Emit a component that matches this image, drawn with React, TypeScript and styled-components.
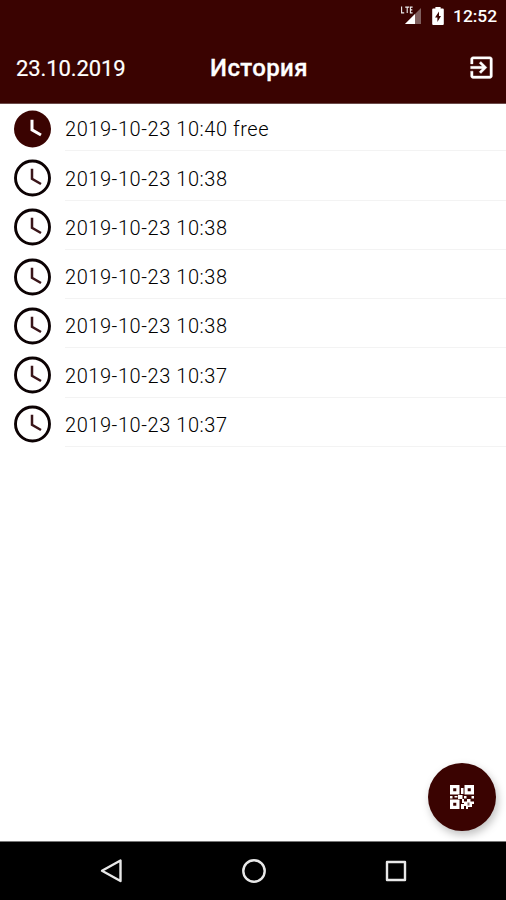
import React from 'react';
import styled, { createGlobalStyle } from 'styled-components';

const Global = createGlobalStyle`
  * { box-sizing: border-box; }
  body { margin: 0; background: #fff; font-family: Roboto, "Noto Sans", sans-serif; }
`;

const Screen = styled.div`
  position: relative;
  display: flex;
  flex-direction: column;
  width: 506px;
  height: 900px;
  overflow: hidden;
  background: #fff;
`;

const Top = styled.header`
  flex: none;
  height: 104px;
  background: #3a0301;
  border-bottom: 1px solid #6b4a49;
  color: #fff;
`;

const StatusBar = styled.div`
  display: flex;
  align-items: center;
  justify-content: flex-end;
  height: 32px;
  padding-right: 9px;
  svg { display: block; }
`;

const Battery = styled.svg`
  margin: 0 9px 0 10px;
`;

const Clock = styled.span`
  width: 44px;
  font-size: 17.4px;
  line-height: 32px;
  font-weight: 500;
  white-space: nowrap;
`;

const AppBar = styled.div`
  display: grid;
  grid-template-columns: 1fr auto 1fr;
  align-items: center;
  height: 71px;
  padding: 0 10px 0 16px;
`;

const DateLabel = styled.span`
  padding-top: 1px;
  font-size: 22px;
  letter-spacing: -0.1px;
  -webkit-text-stroke: 0.2px #fff;
`;

const Title = styled.h1`
  margin: 0;
  padding: 1px 0 0 6px;
  font-size: 24px;
  font-weight: 500;
  letter-spacing: 0.4px;
  -webkit-text-stroke: 0.3px #fff;
`;

const ExitButton = styled.button`
  justify-self: end;
  padding: 0;
  border: 0;
  background: none;
  color: #fff;
  svg { display: block; }
`;

const List = styled.ul`
  flex: 1;
  margin: 0;
  padding: 0;
  list-style: none;
`;

const Row = styled.li`
  display: flex;
  align-items: center;
  height: 49.25px;
  padding-left: 10px;
  &:first-child { height: 47.4px; }
`;

const RowIcon = styled.svg<{ $active?: boolean }>`
  flex: none;
  display: block;
  margin-top: ${(p) => (p.$active ? 2.6 : 4)}px;
`;

const RowText = styled.span<{ $active?: boolean }>`
  flex: 1;
  align-self: stretch;
  display: flex;
  align-items: center;
  margin-left: 11px;
  padding-top: ${(p) => (p.$active ? 4.5 : 6)}px;
  border-bottom: 1px solid #f3f3f3;
  font-size: 20px;
  font-weight: 300;
  letter-spacing: 0.56px;
  color: #000;
`;

const Fab = styled.button`
  position: absolute;
  right: 10px;
  bottom: 69px;
  display: grid;
  place-items: center;
  width: 68px;
  height: 68px;
  padding: 0;
  border: 0;
  border-radius: 50%;
  background: #3a0301;
  box-shadow: 2px 4px 9px rgba(0, 0, 0, 0.25);
`;

const NavBar = styled.nav`
  flex: none;
  display: flex;
  justify-content: center;
  height: 59px;
  padding-left: 2px;
  border-top: 1px solid #777;
  background: #000;
`;

const NavButton = styled.button`
  display: grid;
  place-items: center;
  width: 142px;
  padding: 0;
  border: 0;
  background: none;
`;

const entries = [
  { text: '2019-10-23 10:40 free', active: true },
  { text: '2019-10-23 10:38' },
  { text: '2019-10-23 10:38' },
  { text: '2019-10-23 10:38' },
  { text: '2019-10-23 10:38' },
  { text: '2019-10-23 10:37' },
  { text: '2019-10-23 10:37' },
];

const ClockIcon = ({ active }: { active?: boolean }) => (
  <RowIcon $active={active} width="44" height="44" viewBox="0 0 44 44" fill="none">
    {active ? (
      <circle cx="22.5" cy="22" r="18.5" fill="#3a0301" />
    ) : (
      <circle cx="22.5" cy="22" r="17" stroke="#0c0203" strokeWidth="2.9" />
    )}
    <path d="M22 12.8V22.8L31 28" stroke={active ? '#fff' : '#3a1519'} strokeWidth={active ? 3 : 2.5} />
  </RowIcon>
);

const NAV = { fill: 'none', stroke: '#e8e8e8', strokeWidth: 2.4, strokeLinejoin: 'round' as const };

export default function App() {
  return (
    <Screen>
      <Global />
      <Top>
        <StatusBar>
          <svg width="22" height="22" viewBox="0 0 22 22">
            <path d="M21 3V19H5Z" fill="#80605f" />
            <path d="M15 9V19H5Z" fill="#fff" />
            <path d="M1.6 1.5V7.9H4.2M5.2 2.1H9.2M7.2 2.1V8M12.6 2.1H10.4V7.9H12.6M10.4 4.9H12.3" fill="none" stroke="#eee" strokeWidth="1.1" />
          </svg>
          <Battery width="12" height="20" viewBox="0 0 12 20">
            <path d="M1.2 2.6H3.4V1H8.6V2.6H10.8Q11.8 2.6 11.8 3.6V18Q11.8 19 10.8 19H1.2Q.2 19 .2 18V3.6Q.2 2.6 1.2 2.6Z" fill="#fff" />
            <path d="M7 5.6L3 11.4H5.4V16L9 10H7Z" fill="#3a0301" />
          </Battery>
          <Clock>12:52</Clock>
        </StatusBar>
        <AppBar>
          <DateLabel>23.10.2019</DateLabel>
          <Title>История</Title>
          <ExitButton aria-label="Выход">
            <svg width="29" height="29" viewBox="0 0 24 24" fill="currentColor" stroke="currentColor" strokeWidth="0.3">
              <path d="M10.09 15.59L11.5 17l5-5-5-5-1.41 1.41L12.67 11H3v2h9.67l-2.58 2.59zM19 3H5c-1.11 0-2 .9-2 2v4h2V5h14v14H5v-4H3v4c0 1.1.89 2 2 2h14c1.1 0 2-.9 2-2V5c0-1.1-.9-2-2-2z" />
            </svg>
          </ExitButton>
        </AppBar>
      </Top>
      <List>
        {entries.map((e, i) => (
          <Row key={i}>
            <ClockIcon active={e.active} />
            <RowText $active={e.active}>{e.text}</RowText>
          </Row>
        ))}
      </List>
      <Fab aria-label="QR">
        <svg width="24" height="24" viewBox="0 0 24 24">
          <path fillRule="evenodd" fill="#fff" d="M0 0H9.5V9.5H0ZM3.2 3.2V6.3H6.3V3.2ZM14.5 0H24V9.5H14.5ZM17.7 3.2V6.3H20.8V3.2ZM0 14.5H9.5V24H0ZM3.2 17.7V20.8H6.3V17.7Z" />
          <path fill="#fff" d="M11 3h2.5v6H11zM0 11h2.5v2.5H0zM4.5 11h3v1.500h-3zM8 10h4.500v4H8zM14 11h2.500v2.500H14zM21.500 11H24v2.500h-2.500zM12 14h2v4h-2zM11 19h3v-2.500h3V14h3.500v2.500H24v2.500h-2v3h-4v2h-2v-3h-2v3h-3z" />
          <path fill="#3a0301" fillOpacity="0.6" d="M17.500 17.500h2v3h-2z" />
        </svg>
      </Fab>
      <NavBar>
        <NavButton aria-label="Назад">
          <svg width="26" height="26" viewBox="0 0 26 26"><path d="M21.500 2.500V23L3 12.800Z" {...NAV} /></svg>
        </NavButton>
        <NavButton aria-label="Домой">
          <svg width="26" height="26" viewBox="0 0 26 26"><circle cx="13" cy="13" r="10.700" {...NAV} /></svg>
        </NavButton>
        <NavButton aria-label="Обзор">
          <svg width="26" height="26" viewBox="0 0 26 26"><rect x="4" y="4" width="18" height="18" {...NAV} /></svg>
        </NavButton>
      </NavBar>
    </Screen>
  );
}
